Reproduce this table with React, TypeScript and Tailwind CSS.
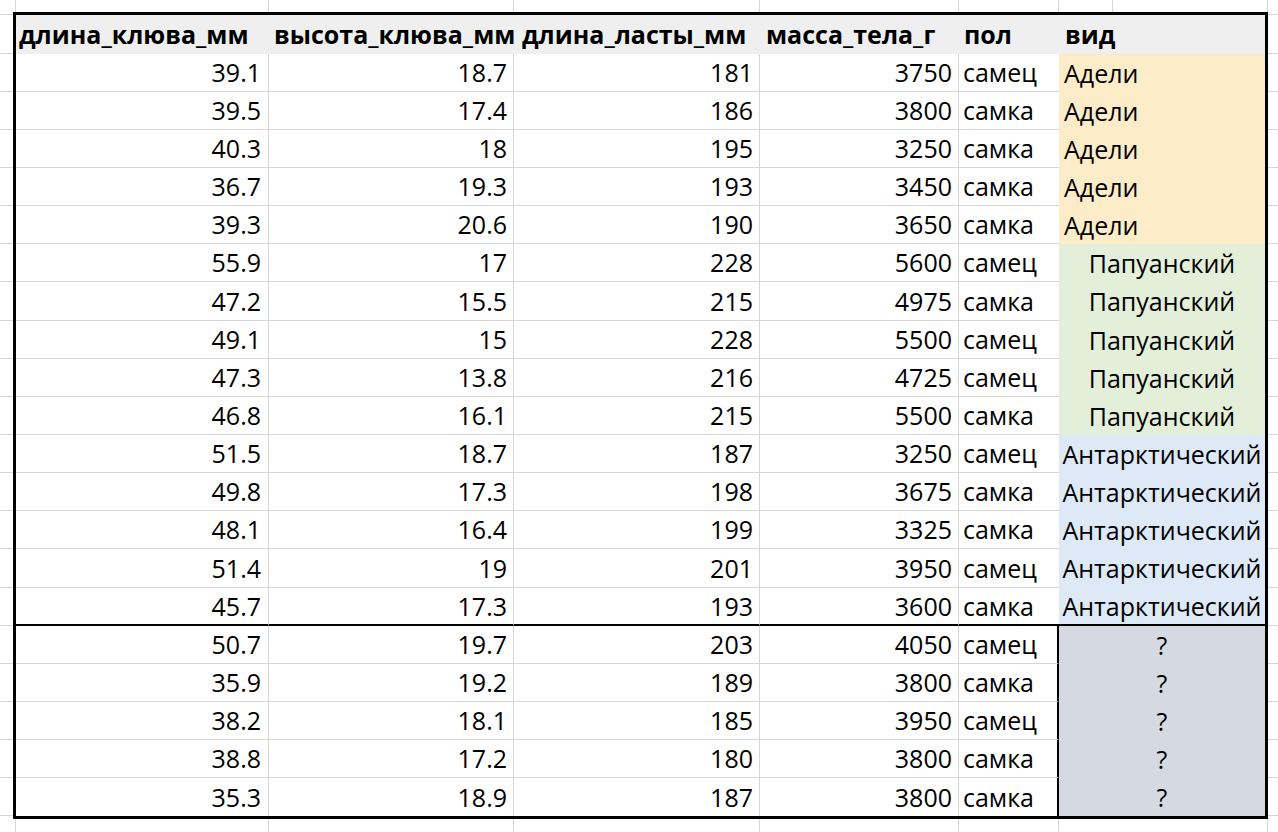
import React from "react";

type Row = [string, string, string, string, string, string];

const rows: Row[] = [
  ["39.1", "18.7", "181", "3750", "самец", "Адели"],
  ["39.5", "17.4", "186", "3800", "самка", "Адели"],
  ["40.3", "18", "195", "3250", "самка", "Адели"],
  ["36.7", "19.3", "193", "3450", "самка", "Адели"],
  ["39.3", "20.6", "190", "3650", "самка", "Адели"],
  ["55.9", "17", "228", "5600", "самец", "Папуанский"],
  ["47.2", "15.5", "215", "4975", "самка", "Папуанский"],
  ["49.1", "15", "228", "5500", "самец", "Папуанский"],
  ["47.3", "13.8", "216", "4725", "самец", "Папуанский"],
  ["46.8", "16.1", "215", "5500", "самка", "Папуанский"],
  ["51.5", "18.7", "187", "3250", "самец", "Антарктический"],
  ["49.8", "17.3", "198", "3675", "самка", "Антарктический"],
  ["48.1", "16.4", "199", "3325", "самка", "Антарктический"],
  ["51.4", "19", "201", "3950", "самец", "Антарктический"],
  ["45.7", "17.3", "193", "3600", "самка", "Антарктический"],
  ["50.7", "19.7", "203", "4050", "самец", "?"],
  ["35.9", "19.2", "189", "3800", "самка", "?"],
  ["38.2", "18.1", "185", "3950", "самец", "?"],
  ["38.8", "17.2", "180", "3800", "самка", "?"],
  ["35.3", "18.9", "187", "3800", "самка", "?"],
];

const rowHeight = (i: number) => (i === 6 || i === 13 ? "h-[39px]" : "h-[38px]");

function speciesClass(v: string) {
  if (v === "Адели") return "bg-[#fdecc8] justify-start pl-[5px]";
  if (v === "Папуанский") return "bg-[#e3efd9] justify-center";
  if (v === "Антарктический") return "bg-[#dde9f6] justify-center";
  return "bg-[#d5d9e1] justify-center";
}

export default function App() {
  return (
    <div className="w-[1278px] h-[832px] bg-white overflow-hidden text-black font-['Open_Sans',_'Noto_Sans',_sans-serif] text-[25px] leading-none">
      {/* top strip */}
      <div className="flex h-[12px]">
        <div className="w-[16px] border-r border-[#d6d6d6]" />
        <div className="w-[253px] border-r border-[#d6d6d6]" />
        <div className="w-[245px] border-r border-[#d6d6d6]" />
        <div className="w-[246px] border-r border-[#d6d6d6]" />
        <div className="w-[199px] border-r border-[#d6d6d6]" />
        <div className="w-[100px] border-r border-[#d6d6d6]" />
        <div className="w-[54px] border-r border-[#d6d6d6]" />
        <div className="w-[155px] border-r border-[#d6d6d6]" />
        <div className="flex-1" />
      </div>

      <div className="flex">
        {/* left gutter */}
        <div className="w-[13px] flex flex-col">
          <div className="h-[3px] border-b border-[#d6d6d6]" />
          <div className="h-[39px] border-b border-[#d6d6d6]" />
          {rows.map((_, i) => (
            <div key={i} className={`${rowHeight(i)} border-b border-[#d6d6d6]`} />
          ))}
        </div>

        {/* table */}
        <div className="w-[1255px] border-[3px] border-black flex flex-col">
          <div className="flex h-[39px] bg-[#efefef] font-bold items-center whitespace-nowrap">
            <div className="w-[253px] pl-[3px]">длина_клюва_мм</div>
            <div className="w-[245px] pl-[5px]">высота_клюва_мм</div>
            <div className="w-[246px] pl-[8px]">длина_ласты_мм</div>
            <div className="w-[199px] pl-[6px]">масса_тела_г</div>
            <div className="w-[100px] pl-[5px]">пол</div>
            <div className="w-[206px] pl-[6px]">вид</div>
          </div>
          {rows.map((r, i) => {
            const last = i === rows.length - 1;
            const sep = i === 14;
            const unknown = i >= 15;
            const bb = last
              ? ""
              : sep
              ? "border-b-2 border-b-black"
              : "border-b border-b-[#d6d6d6]";
            const sb = last ? "" : sep ? "border-b-2 border-b-black" : "";
            return (
              <div key={i} className={`flex ${rowHeight(i)} whitespace-nowrap`}>
                <div className={`w-[253px] flex items-center justify-end pr-[7px] border-r border-r-[#d6d6d6] ${bb}`}>{r[0]}</div>
                <div className={`w-[245px] flex items-center justify-end pr-[6px] border-r border-r-[#d6d6d6] ${bb}`}>{r[1]}</div>
                <div className={`w-[246px] flex items-center justify-end pr-[6px] border-r border-r-[#d6d6d6] ${bb}`}>{r[2]}</div>
                <div className={`w-[199px] flex items-center justify-end pr-[6px] border-r border-r-[#d6d6d6] ${bb}`}>{r[3]}</div>
                <div className={`w-[100px] flex items-center pl-[4px] ${unknown ? "border-r-2 border-r-black" : ""} ${bb}`}>{r[4]}</div>
                <div className={`w-[206px] flex items-center ${speciesClass(r[5])} ${sb}`}>{r[5]}</div>
              </div>
            );
          })}
        </div>

        {/* right gutter */}
        <div className="flex-1 flex flex-col">
          <div className="h-[3px] border-b border-[#d6d6d6]" />
          <div className="h-[39px] border-b border-[#d6d6d6]" />
          {rows.map((_, i) => (
            <div key={i} className={`${rowHeight(i)} border-b border-[#d6d6d6]`} />
          ))}
        </div>
      </div>

      {/* bottom strip */}
      <div className="flex h-[13px]">
        <div className="w-[16px] border-r border-[#d6d6d6]" />
        <div className="w-[253px] border-r border-[#d6d6d6]" />
        <div className="w-[245px] border-r border-[#d6d6d6]" />
        <div className="w-[246px] border-r border-[#d6d6d6]" />
        <div className="w-[199px] border-r border-[#d6d6d6]" />
        <div className="w-[100px] border-r border-[#d6d6d6]" />
        <div className="w-[209px] border-r border-[#d6d6d6]" />
        <div className="flex-1" />
      </div>
    </div>
  );
}
